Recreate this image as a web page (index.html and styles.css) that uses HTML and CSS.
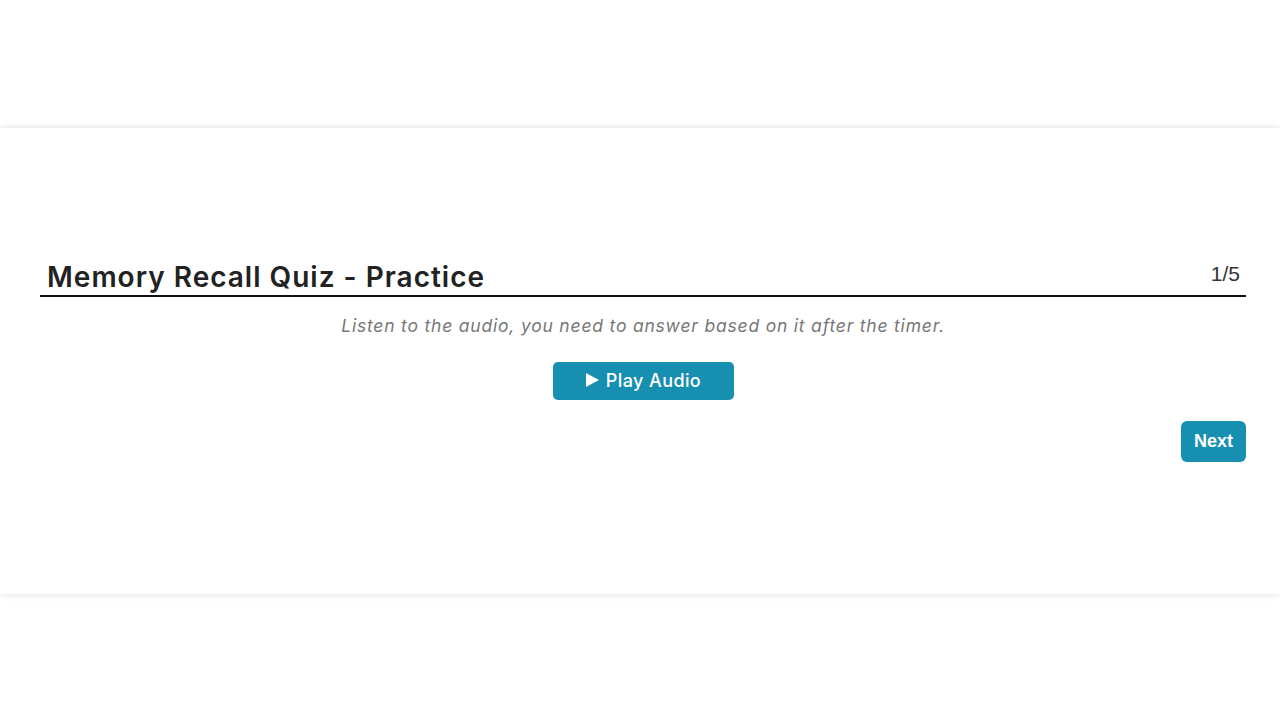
FILE: index.html
```html
<!DOCTYPE html>
<html lang="en">
<head>
    <meta charset="UTF-8">
    <meta name="viewport" content="width=device-width, initial-scale=1.0">
    <title>Memory Recall Quiz - Practice</title>
    <link rel="stylesheet" href="styles.css">
</head>
<body>
    <div class="page">
        <div class="quiz-card">
            <div class="quiz-header">
                <h1 class="quiz-title">Memory Recall Quiz - Practice</h1>
                <span class="quiz-count">1/5</span>
            </div>
            <p class="quiz-hint">Listen to the audio, you need to answer based on it after the timer.</p>
            <div class="audio-row">
                <button class="btn btn-play" type="button">
                    <svg class="play-icon" width="15" height="16" viewBox="0 0 15 16"><path d="M1 1 L14 8 L1 15 Z" fill="#fff"/></svg>
                    Play Audio
                </button>
            </div>
            <div class="actions">
                <button class="btn btn-next" type="button">Next</button>
            </div>
        </div>
    </div>
</body>
</html>
```

FILE: styles.css
```css
body {
    margin: 0;
    background: #fff;
    font-family: Inter, "Liberation Sans", sans-serif;
    color: #222;
}
.page {
    height: 720px;
    display: flex;
    flex-direction: column;
    justify-content: center;
}
.quiz-card {
    height: 466px;
    background: #fff;
    box-shadow: 0 0 8px rgba(0, 0, 0, 0.14);
    padding: 129px 34px 0 40px;
    box-sizing: border-box;
    margin-top: 1px;
}
.quiz-header {
    display: flex;
    justify-content: space-between;
    align-items: flex-end;
    padding: 0 6px 1px 7px;
    border-bottom: 2px solid #111;
}
.quiz-title {
    margin: 0;
    font-size: 28px;
    font-weight: 600;
    letter-spacing: 1px;
    color: #222;
    line-height: 34px;
}
.quiz-count {
    font-family: "Liberation Sans", Arial, sans-serif;
    font-size: 21px;
    color: #333;
    line-height: 34px;
    margin-bottom: 3px;
}
.quiz-hint {
    margin: 17px 0 0;
    text-align: center;
    font-style: italic;
    font-size: 17.5px;
    letter-spacing: 0.8px;
    color: #777;
    line-height: 24px;
}
.audio-row {
    display: flex;
    justify-content: center;
    margin-top: 24px;
}
.btn {
    border: none;
    background: #178fb0;
    color: #fff;
    cursor: pointer;
}
.btn-play {
    width: 181px;
    height: 38px;
    border-radius: 5px;
    font-family: Inter, sans-serif;
    font-size: 18px;
    font-weight: 500;
    letter-spacing: 0.4px;
    display: flex;
    align-items: center;
    justify-content: center;
    gap: 6px;
}
.play-icon {
    margin-top: -1px;
}
.actions {
    display: flex;
    justify-content: flex-end;
    margin-top: 21px;
}
.btn-next {
    width: 65px;
    height: 41px;
    border-radius: 6px;
    font-family: "Liberation Sans", Arial, sans-serif;
    font-size: 18px;
    font-weight: 600;
}
```
